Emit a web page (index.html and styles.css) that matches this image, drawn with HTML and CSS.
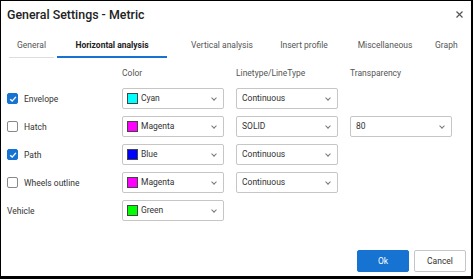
FILE: index.html
```html
<!DOCTYPE html>
<html lang="en">
<head>
  <meta charset="UTF-8">
  <title>General Settings - Metric</title>
  <link rel="stylesheet" href="styles.css">
</head>
<body>
  <div class="dialog">
    <div class="dialog-header">
      <h1 class="dialog-title">General Settings - Metric</h1>
      <span class="close-btn">
        <svg width="7" height="7" viewBox="0 0 7 7"><path d="M0.5 0.5 L6.5 6.5 M6.5 0.5 L0.5 6.5" stroke="#555" stroke-width="1.2" fill="none"/></svg>
      </span>
    </div>

    <div class="tabs">
      <div class="tab tab-general">General</div>
      <div class="tab tab-horizontal active">Horizontal analysis</div>
      <div class="tab tab-vertical">Vertical analysis</div>
      <div class="tab tab-insert">Insert profile</div>
      <div class="tab tab-misc">Miscellaneous</div>
      <div class="tab tab-graph">Graph</div>
    </div>

    <div class="settings-grid">
      <div></div>
      <div class="col-head">Color</div>
      <div class="col-head">Linetype/LineType</div>
      <div class="col-head">Transparency</div>

      <!-- Envelope -->
      <label class="row-label"><span class="check checked"><svg width="8" height="8" viewBox="0 0 8 8"><path d="M1.2 4.2 L3.2 6.1 L6.9 1.9" stroke="#fff" stroke-width="1.4" fill="none"/></svg></span>Envelope</label>
      <div class="dropdown"><span class="swatch cyan"></span><span class="value">Cyan</span><span class="chev"></span></div>
      <div class="dropdown plain"><span class="value">Continuous</span><span class="chev"></span></div>
      <div></div>

      <!-- Hatch -->
      <label class="row-label"><span class="check"></span>Hatch</label>
      <div class="dropdown"><span class="swatch magenta"></span><span class="value">Magenta</span><span class="chev"></span></div>
      <div class="dropdown plain"><span class="value">SOLID</span><span class="chev"></span></div>
      <div class="dropdown plain"><span class="value">80</span><span class="chev"></span></div>

      <!-- Path -->
      <label class="row-label"><span class="check checked"><svg width="8" height="8" viewBox="0 0 8 8"><path d="M1.2 4.2 L3.2 6.1 L6.9 1.9" stroke="#fff" stroke-width="1.4" fill="none"/></svg></span>Path</label>
      <div class="dropdown"><span class="swatch blue"></span><span class="value">Blue</span><span class="chev"></span></div>
      <div class="dropdown plain"><span class="value">Continuous</span><span class="chev"></span></div>
      <div></div>

      <!-- Wheels outline -->
      <label class="row-label"><span class="check"></span>Wheels outline</label>
      <div class="dropdown"><span class="swatch magenta"></span><span class="value">Magenta</span><span class="chev"></span></div>
      <div class="dropdown plain"><span class="value">Continuous</span><span class="chev"></span></div>
      <div></div>

      <!-- Vehicle -->
      <div class="row-label">Vehicle</div>
      <div class="dropdown"><span class="swatch green"></span><span class="value">Green</span><span class="chev"></span></div>
      <div></div>
      <div></div>
    </div>

    <div class="dialog-footer">
      <button class="btn btn-primary">Ok</button>
      <button class="btn">Cancel</button>
    </div>
  </div>
</body>
</html>
```

FILE: styles.css
```css
/* General Styles */
body {
  margin: 0;
  font-family: Roboto, 'Liberation Sans', sans-serif;
  font-size: 8.5px;
  color: #333;
  background: #fff;
}
.dialog {
  width: 473px;
  height: 279px;
  box-sizing: border-box;
  border-style: solid;
  border-color: #000;
  border-width: 1px 2px 3px 1px;
  display: flex;
  flex-direction: column;
}

/* Header */
.dialog-header {
  height: 33px;
  box-sizing: border-box;
  padding: 6px 8px 0 6px;
  display: flex;
  justify-content: space-between;
  align-items: flex-start;
}
.dialog-title {
  margin: 0;
  font-size: 12.4px;
  font-weight: 500;
  line-height: 15px;
  color: #222;
}
.close-btn {
  display: flex;
  margin-top: 4px;
}

/* Tabs */
.tabs {
  display: flex;
  padding-left: 8px;
  height: 24px;
}
.tab {
  box-sizing: border-box;
  height: 24px;
  line-height: 22px;
  text-align: center;
  white-space: nowrap;
  color: #555;
  border-bottom: 2px solid transparent;
}
.tab.active {
  color: #222;
  font-weight: 700;
  border-bottom-color: #1673d1;
}
.tab-general {
  width: 45px;
  margin-right: 3px;
  border-bottom: 1px solid #ddd;
  line-height: 23px;
}
.tab-horizontal { width: 110px; margin-right: 4px; }
.tab-vertical { width: 102px; margin-right: 4px; }
.tab-insert { width: 54px; margin-right: 4px; }
.tab-misc { width: 100px; }
.tab-graph { text-align: left; }

/* Grid of settings */
.settings-grid {
  display: grid;
  grid-template-columns: 103px 102px 102px 102px;
  grid-template-rows: 16px repeat(5, 21px);
  column-gap: 12px;
  row-gap: 7px;
  margin-top: 7px;
  padding-left: 6px;
}
.col-head {
  line-height: 16px;
  color: #555;
}
.row-label {
  display: flex;
  align-items: center;
  color: #333;
}
.check {
  width: 11px;
  height: 11px;
  box-sizing: border-box;
  border: 1px solid #888;
  border-radius: 2px;
  margin-right: 6px;
  display: flex;
  align-items: center;
  justify-content: center;
}
.check.checked {
  background: #1673d1;
  border-color: #1673d1;
}

.dropdown {
  box-sizing: border-box;
  height: 21px;
  border: 1px solid #c6c6c6;
  border-radius: 2px;
  display: flex;
  align-items: center;
  padding: 0 6px 0 4px;
  color: #333;
}
.dropdown.plain {
  padding-left: 5px;
}
.swatch {
  width: 11px;
  height: 11px;
  box-sizing: border-box;
  border: 1px solid #444;
  margin-right: 3px;
}
.swatch.cyan { background: #00ffff; }
.swatch.magenta { background: #ff00ff; }
.swatch.blue { background: #0000ff; }
.swatch.green { background: #00ff00; }
.value {
  flex: 1;
  margin-top: -1px;
}
.chev {
  width: 3px;
  height: 3px;
  border-right: 1px solid #777;
  border-bottom: 1px solid #777;
  transform: rotate(45deg);
  margin: -2px 1px 0 0;
}

/* Footer */
.dialog-footer {
  margin-top: auto;
  display: flex;
  justify-content: flex-end;
  gap: 5px;
  padding: 0 5px 4px 0;
}
.btn {
  width: 52px;
  height: 22px;
  font-family: Roboto, 'Liberation Sans', sans-serif;
  font-size: 8.5px;
  border: 1px solid #c6c6c6;
  border-radius: 2px;
  background: #fff;
  color: #333;
  padding: 0;
}
.btn-primary {
  background: #1673d1;
  border-color: #1673d1;
  color: #fff;
}
```
